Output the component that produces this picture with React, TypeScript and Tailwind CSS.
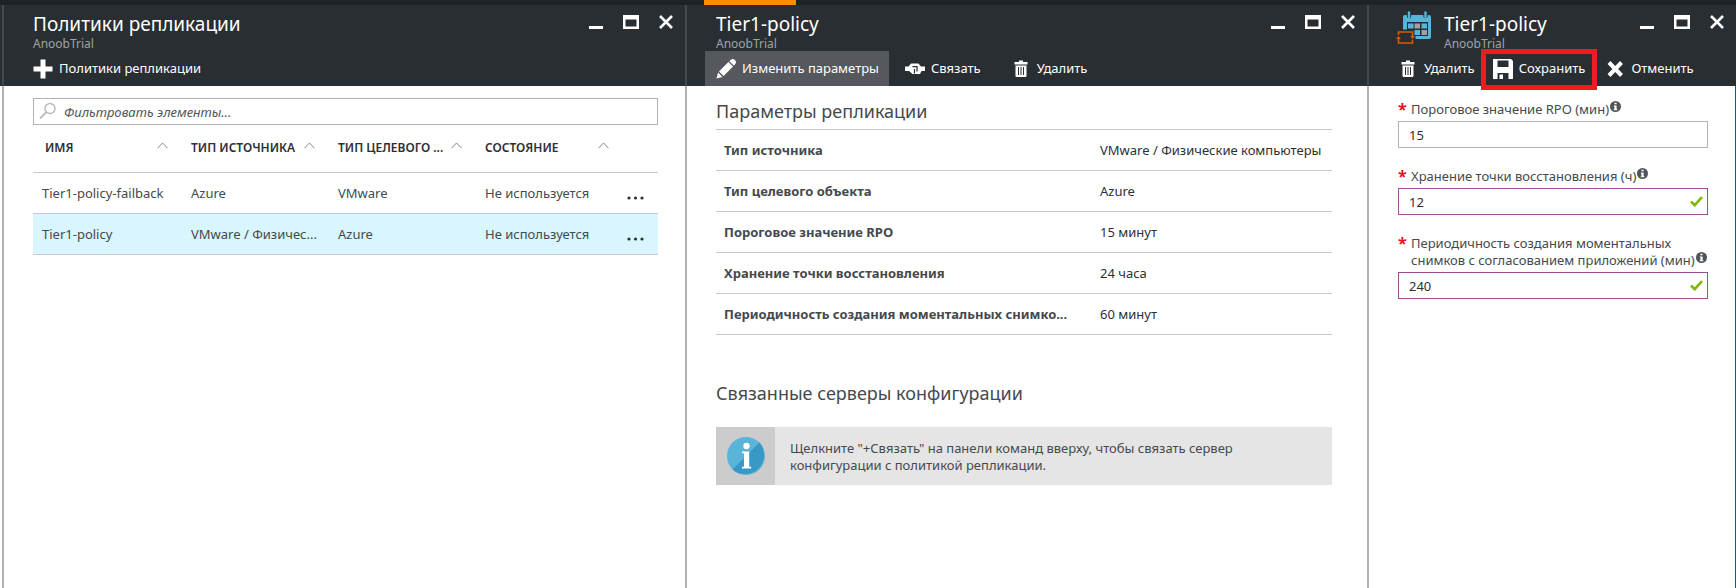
import type { ReactNode } from "react";

type IconProps = { className?: string };

const PlusIcon = () => (
  <svg width="20" height="20" viewBox="0 0 20 20" fill="currentColor" className="shrink-0">
    <path d="M7.5 0.5h5v7h7v5h-7v7h-5v-7h-7v-5h7z" />
  </svg>
);

const PencilIcon = () => (
  <svg width="20" height="20" viewBox="0 0 20 20" fill="currentColor" className="shrink-0">
    <path d="M0.5 19.5l1.6-6 4.4 4.4z" />
    <path d="M3 12.4L12.4 3l4.6 4.6L7.6 17z" />
    <path d="M13.4 2.2l1.2-1.1a3 3 0 0 1 4.3 4.3l-1.1 1.2z" />
  </svg>
);

const LinkIcon = () => (
  <svg width="20" height="20" viewBox="0 0 20 20" className="shrink-0">
    <path
      fill="currentColor"
      d="M0 7.500h3.500L6 4.500h7.500L16 7.500h4v4.500h-3.500L15 15H7.500L4 12H0z"
    />
    <path fill="none" stroke="#292e32" strokeWidth="1.200" d="M7.500 7.600h4.500v5M9.500 10v4.500" />
  </svg>
);

const TrashIcon = () => (
  <svg width="20" height="20" viewBox="0 0 20 20" className="shrink-0">
    <path fill="currentColor" d="M8 1.500h4V3h4.500v2.500h-13V3H8z" />
    <path fill="currentColor" d="M4.500 6.500h11V17a1 1 0 0 1-1 1h-9a1 1 0 0 1-1-1z" />
    <path stroke="#292e32" d="M7.500 8v8M10 8v8M12.500 8v8" />
  </svg>
);

const SaveIcon = () => (
  <svg width="20" height="20" viewBox="0 0 20 20" className="shrink-0">
    <path
      fill="currentColor"
      fillRule="evenodd"
      d="M0 0h18l2 2v18h-4.500v-6h-11v6H0zM4.500 1.500v6.500h11V1.500z"
    />
    <path fill="currentColor" d="M6.500 15.500h3.500V20H6.500z" />
  </svg>
);

const CancelIcon = () => (
  <svg width="18" height="18" viewBox="0 0 18 18" className="shrink-0">
    <path fill="none" stroke="currentColor" strokeWidth="4" d="M2 2.500l12.500 13M14.500 2.500L2 15.500" />
  </svg>
);

const CalendarIcon = () => (
  <svg width="36" height="34" viewBox="0 0 36 34" className="shrink-0">
    <path
      fill="#59b4d9"
      fillRule="evenodd"
      d="M9 4h24a2 2 0 0 1 2 2V26a2 2 0 0 1-2 2H19.500v-3H32V11H11V18.500H7V6a2 2 0 0 1 2-2z"
    />
    <path stroke="#292e32" strokeWidth="4.400" strokeLinecap="round" d="M13 0v5M29.500 0v5" />
    <path stroke="#59b4d9" strokeWidth="2.400" strokeLinecap="round" d="M13 1.500V6M29.500 1.500V6" />
    <path fill="#59b4d9" d="M12 12.500h5.500v5H12zM25.500 12.500H31v5h-5.500zM18.500 19H24v5h-5.500z" />
    <path fill="#a0a1a2" d="M18.500 12.500H24v5h-5.500zM25.500 19H31v5h-5.500z" />
    <path
      fill="none"
      stroke="#dd5900"
      strokeWidth="1.600"
      d="M2.500 24v-3h14V25M16.500 28.500V32h-14v-5.500"
    />
    <path fill="#dd5900" d="M0 28l2.500-3 2.500 3zM14 25h5l-2.500 3z" />
  </svg>
);

const SearchIcon = ({ className }: IconProps) => (
  <svg width="18" height="18" viewBox="0 0 18 18" className={className} fill="none" stroke="#b8babc">
    <circle cx="11" cy="6.500" r="5" strokeWidth="1.400" />
    <path strokeWidth="1.800" d="M7.300 10.200L1 16.500" />
  </svg>
);

const CaretIcon = () => (
  <svg width="11" height="7" viewBox="0 0 11 7" fill="none" stroke="#808488" className="shrink-0">
    <path d="M0.500 6.200l5-5.200 5 5.200" />
  </svg>
);

const CheckIcon = ({ className }: IconProps) => (
  <svg width="13" height="11" viewBox="0 0 13 11" className={className}>
    <path fill="none" stroke="#7fba00" strokeWidth="2.600" d="M1 5.500l3.700 3.700L12 1.200" />
  </svg>
);

const HintIcon = () => (
  <svg width="11" height="11" viewBox="0 0 10 10" className="mb-0.5 ml-px inline-block align-baseline">
    <circle cx="5" cy="5" r="5" fill="#4f5459" />
    <path fill="#fff" d="M4 1.500h2V3H4zM3.500 4H6v3.500h.7v1H3.400v-1H4V5h-.5z" />
  </svg>
);

const InfoIcon = () => (
  <svg width="38" height="38" viewBox="0 0 38 38">
    <circle cx="19" cy="19" r="19" fill="#59b4d9" />
    <path fill="#3999c6" d="M32.400 5.600A19 19 0 0 1 5.600 32.400z" />
    <circle cx="19.500" cy="9" r="3.200" fill="#fff" />
    <path fill="#fff" d="M15 14.500h7.200v15.200h2v1.800H15v-1.800h2V16.300h-2z" />
  </svg>
);

function WindowButtons() {
  return (
    <div className="flex items-start gap-5 pt-2.5 pr-3 text-white">
      <button aria-label="Свернуть">
        <svg width="14" height="14" viewBox="0 0 14 14">
          <path fill="currentColor" d="M0 11h14v3H0z" />
        </svg>
      </button>
      <button aria-label="Развернуть">
        <svg width="16" height="14" viewBox="0 0 16 14">
          <path fill="currentColor" fillRule="evenodd" d="M0 0h16v14H0zM2.500 4.500v7h11v-7z" />
        </svg>
      </button>
      <button aria-label="Закрыть">
        <svg width="14" height="14" viewBox="0 0 14 14">
          <path stroke="currentColor" strokeWidth="2.600" d="M1 1l12 12M13 1L1 13" />
        </svg>
      </button>
    </div>
  );
}

type BladeProps = {
  title: string;
  icon?: ReactNode;
  commands: ReactNode;
  accent?: boolean;
  inset?: string;
  headPad: string;
  bodyPad: string;
  children: ReactNode;
};

function Blade({ title, icon, commands, accent, inset = "", headPad, bodyPad, children }: BladeProps) {
  return (
    <section className="flex min-w-0 flex-col">
      <div className="h-[5px] bg-[#1f2327]">{accent && <div className="ml-[19px] h-full w-[92px] bg-[#ff8c00]" />}</div>
      <div className={`bg-[#292e32] ${inset}`}>
        <header className="border-l-2 border-[#44494d]">
          <div className="flex h-[46px] justify-between">
            <div className={`flex min-w-0 gap-3 ${headPad}`}>
              {icon && <div className="pt-1.5">{icon}</div>}
              <div className="min-w-0 pt-1.5">
                <h1 className="truncate text-[19px] leading-[26px] text-white">{title}</h1>
                <p className="text-[12px] leading-[14px] text-[#a0a3a6]">AnoobTrial</p>
              </div>
            </div>
            <WindowButtons />
          </div>
          <div className="flex h-[35px]">{commands}</div>
        </header>
      </div>
      <div className={`flex flex-1 flex-col ${inset}`}>
        <div className={`flex-1 border-l-2 border-[#b2b2b2] ${bodyPad}`}>{children}</div>
      </div>
    </section>
  );
}

type CommandProps = { icon: ReactNode; label: string; className?: string; children?: ReactNode };

function Command({ icon, label, className = "", children }: CommandProps) {
  return (
    <button className={`relative flex items-center gap-1.5 whitespace-nowrap text-[13px] text-white ${className}`}>
      {icon}
      <span>{label}</span>
      {children}
    </button>
  );
}

const columns = ["ИМЯ", "ТИП ИСТОЧНИКА", "ТИП ЦЕЛЕВОГО ...", "СОСТОЯНИЕ"];

const policies = [
  { name: "Tier1-policy-failback", source: "Azure", target: "VMware", selected: false },
  { name: "Tier1-policy", source: "VMware / Физичес...", target: "Azure", selected: true },
];

const settings = [
  ["Тип источника", "VMware / Физические компьютеры"],
  ["Тип целевого объекта", "Azure"],
  ["Пороговое значение RPO", "15 минут"],
  ["Хранение точки восстановления", "24 часа"],
  ["Периодичность создания моментальных снимко...", "60 минут"],
];

type FieldProps = { id: string; label: string; value: string; changed?: boolean };

function Field({ id, label, value, changed }: FieldProps) {
  return (
    <div className="mb-5">
      <label htmlFor={id} className="flex gap-1.5 pb-[3px] text-[13px] leading-[17px] text-[#44494e]">
        <span className="w-[7px] text-[16px] font-bold text-[#e81123]">*</span>
        <span className="-mr-3">
          {label}
          <HintIcon />
        </span>
      </label>
      <div className="relative">
        <input
          id={id}
          defaultValue={value}
          className={`block h-[27px] w-full border bg-white px-2.5 text-[13px] text-[#2b3036] outline-none ${
            changed ? "border-[#9b4f96]" : "border-[#b2b2b2]"
          }`}
        />
        {changed && <CheckIcon className="absolute top-2 right-[5px]" />}
      </div>
    </div>
  );
}

export default function App() {
  return (
    <main className="grid min-h-screen grid-cols-[685fr_682fr_369fr] bg-white font-['Noto_Sans','Open_Sans',sans-serif] text-[13px] text-[#44494e]">
      <Blade
        title="Политики репликации"
        inset="pl-0.5"
        headPad="pl-[29px]"
        bodyPad="pt-3 pr-[27px] pl-[29px]"
        commands={<Command icon={<PlusIcon />} label="Политики репликации" className="pl-[29px]" />}
      >
        <div className="relative">
          <SearchIcon className="absolute top-1 left-1.5" />
          <input
            aria-label="Фильтровать элементы"
            placeholder="Фильтровать элементы..."
            className="block h-[27px] w-full border border-[#b2b2b2] pr-2 pl-[30px] text-[13px] italic outline-none placeholder:text-[#50555a]"
          />
        </div>
        <table className="w-full table-fixed border-collapse text-left">
          <colgroup>
            <col className="w-[149px]" />
            <col className="w-[147px]" />
            <col className="w-[147px]" />
            <col className="w-[147px]" />
            <col />
          </colgroup>
          <thead>
            <tr className="h-[47px] border-b border-[#c8c9ca]">
              {columns.map((c, i) => (
                <th key={c} className={i === 0 ? "pr-3.5 pl-3" : "pr-3.5 pl-[9px]"}>
                  <div className="flex items-center justify-between whitespace-nowrap text-[12px] font-semibold text-[#2b3036]">
                    {c}
                    <span className="pb-1.5">
                      <CaretIcon />
                    </span>
                  </div>
                </th>
              ))}
              <th />
            </tr>
          </thead>
          <tbody>
            {policies.map((p) => (
              <tr key={p.name} className={`h-[41px] border-b border-[#c8c9ca] ${p.selected ? "bg-[#d9f5fe]" : ""}`}>
                <td className="pt-0.5 pl-[9px] whitespace-nowrap">{p.name}</td>
                <td className="pt-0.5 pl-[9px] whitespace-nowrap">{p.source}</td>
                <td className="pt-0.5 pl-[9px] whitespace-nowrap">{p.target}</td>
                <td className="pt-0.5 pl-[9px] whitespace-nowrap">Не используется</td>
                <td className="pt-2.5 pl-1">
                  <button aria-label="Действия" className="block">
                    <svg width="17" height="4" viewBox="0 0 17 4" fill="#2b3036">
                      <circle cx="2" cy="2" r="1.600" />
                      <circle cx="8.500" cy="2" r="1.600" />
                      <circle cx="15" cy="2" r="1.600" />
                    </svg>
                  </button>
                </td>
              </tr>
            ))}
          </tbody>
        </table>
      </Blade>

      <Blade
        title="Tier1-policy"
        accent
        headPad="pl-[29px]"
        bodyPad="pt-3 pr-[35px] pl-[29px]"
        commands={
          <>
            <Command icon={<PencilIcon />} label="Изменить параметры" className="ml-[18px] bg-[#55585c] pr-2.5 pl-[11px]" />
            <Command icon={<LinkIcon />} label="Связать" className="pr-2.5 pl-4" />
            <Command icon={<TrashIcon />} label="Удалить" className="pr-2.5 pl-5" />
          </>
        }
      >
        <h2 className="pb-[5px] text-[18px] leading-[26px]">Параметры репликации</h2>
        <table className="w-full table-fixed border-collapse text-left">
          <colgroup>
            <col className="w-[376px]" />
            <col />
          </colgroup>
          <tbody>
            {settings.map(([k, v]) => (
              <tr key={k} className="h-[41px] border-y border-[#c8c9ca]">
                <th className="pt-0.5 pl-2 font-bold whitespace-nowrap">{k}</th>
                <td className="pt-0.5 pl-2 whitespace-nowrap text-[#2b3036]">{v}</td>
              </tr>
            ))}
          </tbody>
        </table>
        <h2 className="pt-[45px] pb-[21px] text-[18px] leading-[26px]">Связанные серверы конфигурации</h2>
        <div className="flex min-h-[58px] bg-[#e5e5e5]">
          <div className="flex w-[59px] shrink-0 items-center justify-center bg-[#cccccc]">
            <InfoIcon />
          </div>
          <p className="max-w-[490px] self-center pt-0.5 pl-[15px] leading-[17px]">
            Щелкните "+Связать" на панели команд вверху, чтобы связать сервер конфигурации с политикой репликации.
          </p>
        </div>
      </Blade>

      <Blade
        title="Tier1-policy"
        icon={<CalendarIcon />}
        headPad="pl-[27px]"
        bodyPad="border-r border-r-[#1f5673] pt-[15px] pr-[27px] pl-[29px]"
        commands={
          <>
            <Command icon={<TrashIcon />} label="Удалить" className="pl-[29px]" />
            <Command icon={<SaveIcon />} label="Сохранить" className="pr-3 pl-[18px]">
              <span className="pointer-events-none absolute -top-0.5 -bottom-1 right-0 left-1.5 border-[5px] border-[#ed1c24]" />
            </Command>
            <Command icon={<CancelIcon />} label="Отменить" className="pl-2.5" />
          </>
        }
      >
        <Field id="rpo" label="Пороговое значение RPO (мин)" value="15" />
        <Field id="retention" label="Хранение точки восстановления (ч)" value="12" changed />
        <Field
          id="snapshots"
          label="Периодичность создания моментальных снимков с согласованием приложений (мин)"
          value="240"
          changed
        />
      </Blade>
    </main>
  );
}
